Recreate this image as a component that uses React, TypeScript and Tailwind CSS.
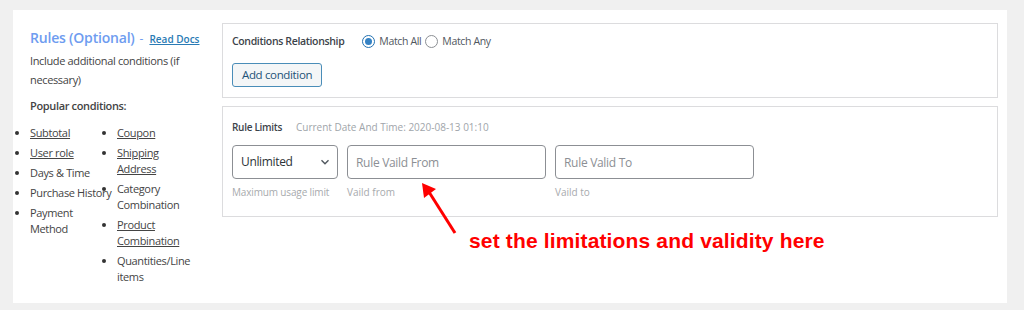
import React from "react";

const FONT = { fontFamily: '"Open Sans", "Noto Sans", sans-serif' };

function Radio({ checked }: { checked?: boolean }) {
  return (
    <span
      className={`inline-flex h-[13px] w-[13px] items-center justify-center rounded-full border bg-white ${
        checked ? "border-[#2271b1]" : "border-[#8c8f94]"
      }`}
    >
      {checked && <span className="h-[7px] w-[7px] rounded-full bg-[#3582c4]" />}
    </span>
  );
}

type Cond = { label: string; link: boolean; nowrap?: boolean };

const leftItems: Cond[] = [
  { label: "Subtotal", link: true },
  { label: "User role", link: true },
  { label: "Days & Time", link: false },
  { label: "Purchase History", link: false, nowrap: true },
  { label: "Payment Method", link: false },
];

const rightItems: Cond[] = [
  { label: "Coupon", link: true },
  { label: "Shipping Address", link: true },
  { label: "Category Combination", link: false },
  { label: "Product Combination", link: true },
  { label: "Quantities/Line items", link: false },
];

function CondList({ items, width }: { items: Cond[]; width: string }) {
  return (
    <ul className={`${width} list-disc pl-[17px] text-[11px] leading-[16px] tracking-[-0.35px] text-[#444]`}>
      {items.map((it) => (
        <li key={it.label} className={`mb-[4px] marker:text-[#333] ${it.nowrap ? "whitespace-nowrap" : ""}`}>
          <span className={it.link ? "underline" : ""}>{it.label}</span>
        </li>
      ))}
    </ul>
  );
}

export default function App() {
  return (
    <div className="h-[310px] w-[1024px] bg-[#f0f0f0] pt-[10px] pl-[13px]" style={FONT}>
      <div className="flex h-[293px] w-[994px] bg-white pt-[13px] pr-[9px]">
        {/* left column */}
        <div className="w-[209px] shrink-0">
          <div className="flex items-baseline pl-[17px] pt-[4px]">
            <span className="text-[14px] font-semibold tracking-[-0.2px] text-[#6e9cf0]">Rules (Optional)</span>
            <span className="ml-[5px] text-[12px] text-[#6e9cf0]">-</span>
            <a className="ml-[6px] text-[10px] font-semibold text-[#2a7bb5] underline">Read Docs</a>
          </div>
          <p className="mt-[3px] w-[189px] pl-[17px] text-[11px] leading-[19px] tracking-[-0.35px] text-[#444]">
            Include additional conditions (if necessary)
          </p>
          <p className="mt-[9px] pl-[17px] text-[11px] font-semibold tracking-[-0.35px] text-[#444]">
            Popular conditions:
          </p>
          <div className="mt-[10px] flex">
            <CondList items={leftItems} width="w-[87px]" />
            <CondList items={rightItems} width="w-[95px]" />
          </div>
        </div>

        {/* right column */}
        <div className="flex-1">
          <div className="h-[75px] border border-[#dcdcde] px-[9px] pt-[10px]">
            <div className="flex items-center text-[10.5px] tracking-[-0.35px]">
              <span className="font-semibold text-[#3c434a]">Conditions Relationship</span>
              <label className="ml-[18px] flex items-center gap-[4px] text-[#50575e]">
                <Radio checked />
                <span>Match All</span>
              </label>
              <label className="ml-[4px] flex items-center gap-[4px] text-[#50575e]">
                <Radio />
                <span>Match Any</span>
              </label>
            </div>
            <button className="mt-[13px] h-[24px] rounded-[3px] border border-[#4a8db8] bg-[#f4f6f7] px-[9px] text-[11.5px] tracking-[-0.35px] text-[#1e5378]">
              Add condition
            </button>
          </div>

          <div className="mt-[8px] h-[111px] border border-[#dcdcde] px-[9px] pt-[13px]">
            <div className="flex items-center text-[10px]">
              <span className="font-semibold tracking-[-0.3px] text-[#3c434a]">Rule Limits</span>
              <span className="ml-[14px] text-[#a0a5aa]">Current Date And Time: 2020-08-13 01:10</span>
            </div>
            <div className="mt-[10px] flex gap-[9px]">
              <div className="flex w-[106px] flex-col">
                <div className="flex h-[34px] items-center justify-between rounded-[4px] border border-[#8c8f94] pl-[8px] pr-[7px] text-[12px] tracking-[-0.35px] text-[#2c3338]">
                  <span>Unlimited</span>
                  <svg width="10" height="10" viewBox="0 0 10 10" fill="none" stroke="#50575e" strokeWidth="1.4">
                    <path d="M1.5 3.2 L5 6.7 L8.5 3.2" />
                  </svg>
                </div>
                <span className="mt-[6px] whitespace-nowrap text-[10px] tracking-[-0.15px] text-[#a7aaad]">
                  Maximum usage limit
                </span>
              </div>
              <div className="flex w-[199px] flex-col">
                <input
                  placeholder="Rule Vaild From"
                  className="h-[34px] rounded-[4px] border border-[#8c8f94] px-[8px] text-[12px] tracking-[-0.3px] outline-none placeholder:text-[#8c8f94]"
                  style={FONT}
                />
                <span className="mt-[6px] text-[10px] text-[#a7aaad]">Vaild from</span>
              </div>
              <div className="flex w-[199px] flex-col">
                <input
                  placeholder="Rule Valid To"
                  className="h-[34px] rounded-[4px] border border-[#8c8f94] px-[8px] text-[12px] tracking-[-0.3px] outline-none placeholder:text-[#8c8f94]"
                  style={FONT}
                />
                <span className="mt-[6px] text-[10px] text-[#a7aaad]">Vaild to</span>
              </div>
            </div>
          </div>

          <div className="relative">
            <svg className="absolute left-[195px] top-[-37px]" width="45" height="58" viewBox="0 0 45 58">
              <line x1="38" y1="53" x2="12" y2="12" stroke="#ff0000" strokeWidth="3" />
              <polygon points="5,3 7,18 19,9" fill="#ff0000" />
            </svg>
            <p
              className="pl-[247px] pt-[12px] text-[21px] font-bold leading-[24px] tracking-[0.15px] text-[#ff0000]"
              style={{ fontFamily: '"Liberation Sans", Arial, sans-serif' }}
            >
              set the limitations and validity here
            </p>
          </div>
        </div>
      </div>
    </div>
  );
}
